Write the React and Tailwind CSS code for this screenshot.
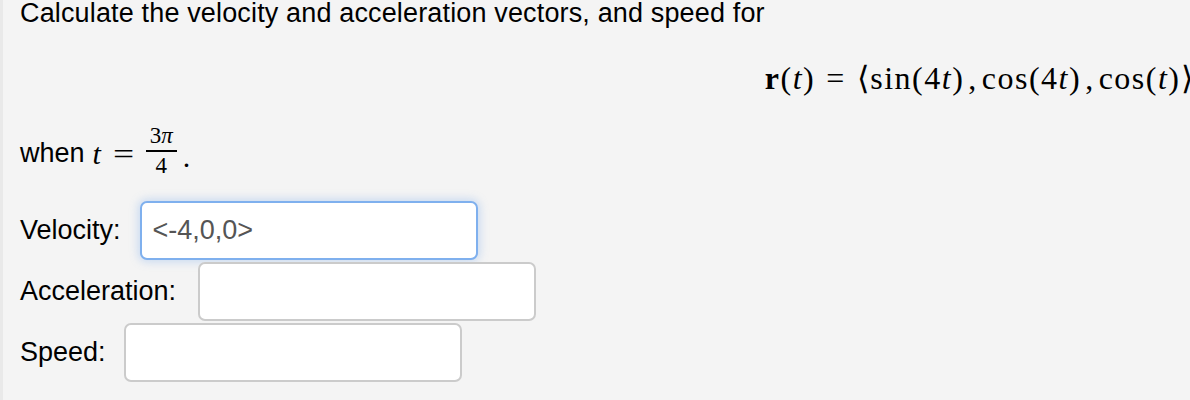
export default function App() {
  const sans = { fontFamily: '"Liberation Sans", Arial, sans-serif' };
  return (
    <div
      className="w-[1190px] h-[400px] overflow-hidden bg-[#f4f4f4] border-l-[3px] border-[#e9e9e9] text-black"
      style={sans}
    >
      <div className="pl-[17px] text-[27px] leading-[27px] tracking-[0.15px] whitespace-nowrap">
        Calculate the velocity and acceleration vectors, and speed for
      </div>
      <div className="flex justify-end -mr-[4px] mt-[35px] h-[32px] items-end whitespace-nowrap font-['Liberation_Serif'] text-[32px] leading-[32px] tracking-[1.5px]">
        <span className="font-bold">r</span>
        <span>(</span>
        <span className="italic">t</span>
        <span>)</span>
        <span className="mx-[11px]">=</span>
        <span>⟨sin(4</span>
        <span className="italic">t</span>
        <span>)</span>
        <span className="ml-[4px]">,</span>
        <span className="ml-[4px]">cos(4</span>
        <span className="italic">t</span>
        <span>)</span>
        <span className="ml-[4px]">,</span>
        <span className="ml-[4px]">cos(</span>
        <span className="italic">t</span>
        <span>)⟩</span>
      </div>
      <div className="flex items-center pl-[17px] mt-[31px] h-[52px]">
        <span className="text-[27px] mt-[4px]">when</span>
        <span className="font-['Liberation_Serif'] italic text-[30px] ml-[8px] mt-[4px]">t</span>
        <span className="font-['Liberation_Serif'] text-[30px] ml-[14px] mt-[4px] scale-x-125">=</span>
        <span className="inline-flex flex-col items-center ml-[14px] font-['Liberation_Serif'] text-[23px] leading-[20px]">
          <span>3<span className="italic">π</span></span>
          <span className="w-[31px] h-[2px] bg-black mt-[4px] mb-[4px]"></span>
          <span>4</span>
        </span>
        <span className="font-['Liberation_Serif'] text-[30px] ml-[6px] mt-[10px]">.</span>
      </div>
      <div className="pl-[17px] mt-[24px] flex flex-col gap-[2px]">
        <div className="flex items-center h-[59px]">
          <span className="text-[27px]">Velocity:</span>
          <div className="ml-[19px] w-[338px] h-[59px] bg-white border-2 border-[#7fb0ee] rounded-[7px] shadow-[0_0_8px_2px_rgba(120,170,235,0.35)] flex items-center pl-[11px] text-[27px] text-[#555]">
            &lt;-4,0,0&gt;
          </div>
        </div>
        <div className="flex items-center h-[59px]">
          <span className="text-[27px]">Acceleration:</span>
          <div className="ml-[22px] w-[338px] h-[59px] bg-white border-2 border-[#cbcbcb] rounded-[7px]"></div>
        </div>
        <div className="flex items-center h-[59px]">
          <span className="text-[27px]">Speed:</span>
          <div className="ml-[18px] w-[338px] h-[59px] bg-white border-2 border-[#cbcbcb] rounded-[7px]"></div>
        </div>
      </div>
    </div>
  );
}
